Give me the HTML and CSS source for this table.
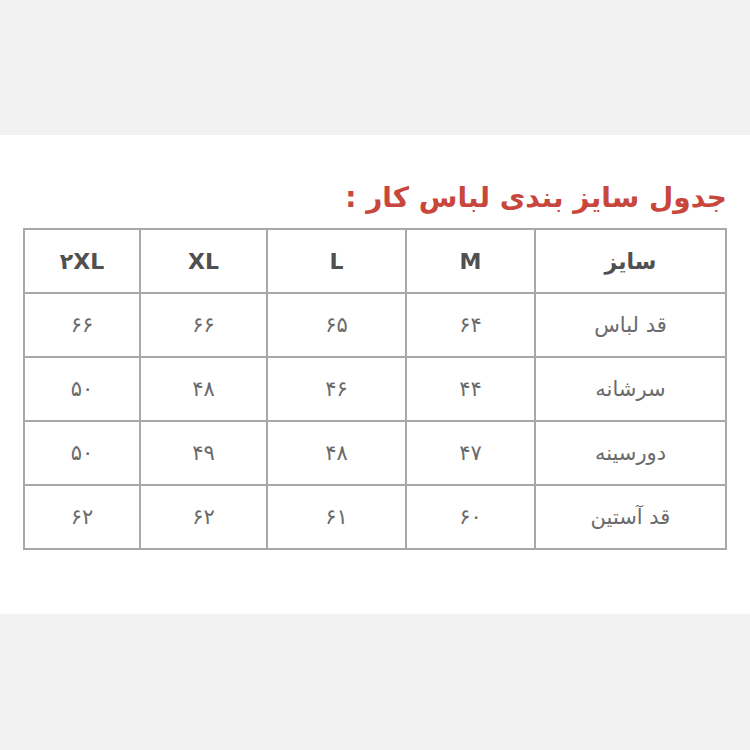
FILE: index.html
```html
<!DOCTYPE html>
<html lang="fa" dir="rtl">
<head>
<meta charset="utf-8">
<link rel="stylesheet" href="styles.css">
</head>
<body>
<div class="page">
  <div class="band-top"></div>
  <section class="card">
    <h1 class="title">جدول سایز بندی لباس کار :</h1>
    <table class="sizes">
      <colgroup>
        <col class="c-label"><col class="c-m"><col class="c-l"><col class="c-xl"><col class="c-2xl">
      </colgroup>
      <thead>
        <tr><th>سایز</th><th>M</th><th>L</th><th>XL</th><th>۲XL</th></tr>
      </thead>
      <tbody>
        <tr><td>قد لباس</td><td>۶۴</td><td>۶۵</td><td>۶۶</td><td>۶۶</td></tr>
        <tr><td>سرشانه</td><td>۴۴</td><td>۴۶</td><td>۴۸</td><td>۵۰</td></tr>
        <tr><td>دورسینه</td><td>۴۷</td><td>۴۸</td><td>۴۹</td><td>۵۰</td></tr>
        <tr><td>قد آستین</td><td>۶۰</td><td>۶۱</td><td>۶۲</td><td>۶۲</td></tr>
      </tbody>
    </table>
  </section>
</div>
</body>
</html>
```
FILE: styles.css
```css
html, body {
  margin: 0;
  padding: 0;
  background: #f2f2f2;
}
.page {
  width: 750px;
  height: 750px;
  display: flex;
  flex-direction: column;
}
.band-top {
  height: 135px;
}
.card {
  background: #ffffff;
  height: 479px;
  box-sizing: border-box;
  padding: 43px 23px 0 23px;
}
.title {
  margin: 0 0 10px 0;
  font-family: "DejaVu Sans", sans-serif;
  font-weight: bold;
  font-size: 28px;
  line-height: 40px;
  height: 40px;
  color: #c8463c;
  text-align: right;
}
.sizes {
  width: 704px;
  border-collapse: collapse;
  table-layout: fixed;
  font-family: "DejaVu Sans", sans-serif;
  color: #666666;
}
.c-label { width: 191px; }
.c-m { width: 129px; }
.c-l { width: 139px; }
.c-xl { width: 127px; }
.c-2xl { width: 116px; }
.sizes th, .sizes td {
  border: 2px solid #a8a8a8;
  height: 62px;
  padding: 0;
  text-align: center;
  vertical-align: middle;
}
.sizes th {
  font-weight: bold;
  font-size: 22px;
  color: #505050;
}
.sizes td {
  font-size: 21px;
  color: #6a6a6a;
}
```
